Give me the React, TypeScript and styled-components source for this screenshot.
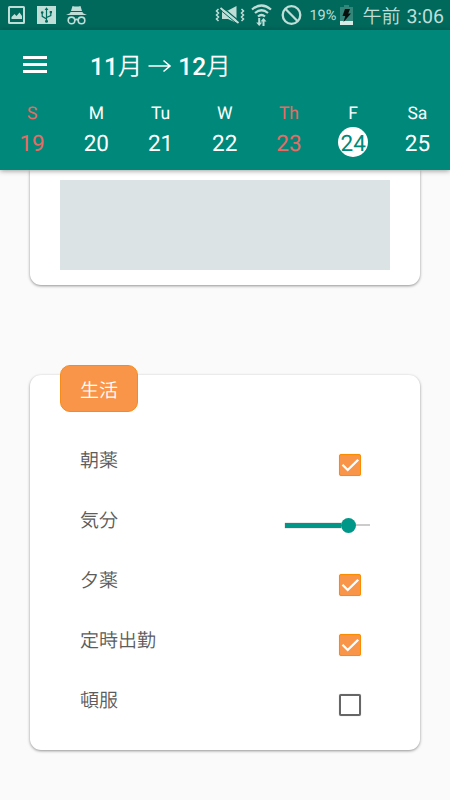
import React from "react";
import styled, { createGlobalStyle } from "styled-components";

const GlobalStyle = createGlobalStyle`
  * { box-sizing: border-box; }
  body {
    margin: 0;
    background: #fafafa;
    font-family: Roboto, "Noto Sans CJK JP", sans-serif;
    text-rendering: geometricPrecision;
    overflow: hidden;
  }
`;

const Screen = styled.div`
  width: 450px;
  height: 800px;
  overflow: hidden;
  background: #fafafa;
  display: flex;
  flex-direction: column;
`;

const StatusBar = styled.div`
  height: 30px;
  flex: none;
  background: #00695c;
  color: #bfded8;
  display: flex;
  align-items: center;
  justify-content: space-between;
  padding: 0 6px 0 7px;
`;

const StatusGroup = styled.div`
  display: flex;
  align-items: center;
  height: 30px;
`;

const Glyph = styled.svg<{ $gap?: number }>`
  display: block;
  flex: none;
  margin-right: ${(p) => p.$gap ?? 0}px;
`;

const Percent = styled.span`
  font-size: 14.5px;
  line-height: 30px;
  margin-right: 4px;
  padding-top: 2px;
`;

const Clock = styled.span`
  display: flex;
  gap: 6px;
  font-size: 19px;
  line-height: 30px;
  font-weight: 350;
  padding-top: 3px;
`;

const ClockDigits = styled.span`
  font-weight: 400;
  font-size: 19.5px;
`;

const Header = styled.header`
  position: relative;
  z-index: 1;
  height: 140px;
  flex: none;
  background: #00897b;
  color: #fff;
  box-shadow: 0 1px 5px rgba(0, 0, 0, 0.38);
`;

const TitleRow = styled.div`
  display: flex;
  align-items: center;
  height: 71px;
  padding-left: 23px;
`;

const MenuButton = styled.button`
  width: 24px;
  height: 17px;
  padding: 0;
  border: 0;
  background: none;
  display: flex;
  flex-direction: column;
  justify-content: space-between;
  margin: -2px 43px 0 0;
`;

const MenuLine = styled.span`
  height: 3px;
  width: 24px;
  background: #fff;
`;

const Title = styled.h1`
  margin: 0;
  display: flex;
  align-items: center;
  font-size: 24.5px;
  line-height: 30px;
  font-weight: 500;
`;

const MonthSuffix = styled.span`
  font-weight: 350;
`;

const Week = styled.div`
  display: grid;
  grid-template-columns: repeat(7, 1fr);
  margin-right: 0.5px;
`;

const Day = styled.div<{ $holiday?: boolean }>`
  display: flex;
  flex-direction: column;
  align-items: center;
  color: ${(p) => (p.$holiday ? "#e76b64" : "#fff")};
`;

const DayName = styled.span`
  font-size: 17.5px;
  line-height: 22px;
  height: 26px;
  padding-top: 2px;
`;

const DayNumber = styled.span<{ $selected?: boolean }>`
  width: 30px;
  height: 30px;
  border-radius: 50%;
  display: flex;
  justify-content: center;
  font-size: 22.5px;
  line-height: 34px;
  background: ${(p) => (p.$selected ? "#fff" : "transparent")};
  color: ${(p) => (p.$selected ? "#00897b" : "inherit")};
`;

const Content = styled.main`
  flex: 1;
  padding: 0 30px;
  min-height: 0;
`;

const cardShadow = "0 1px 3px rgba(0, 0, 0, 0.42)";

const TopCard = styled.section`
  height: 115px;
  padding: 10px 30px 15px;
  background: #fff;
  border-radius: 0 0 11px 11px;
  box-shadow: ${cardShadow};
`;

const NoteArea = styled.div`
  height: 90px;
  background: #dbe3e4;
`;

const Card = styled.section`
  height: 375px;
  margin-top: 90px;
  padding: 0 50px 0 30px;
  background: #fff;
  border-radius: 11px;
  box-shadow: ${cardShadow};
`;

const Tag = styled.div`
  position: relative;
  top: -10px;
  width: 78px;
  height: 47px;
  border: 1px solid #f68b1a;
  border-radius: 10px;
  background: #f99548;
  color: #fff;
  font-size: 19px;
  line-height: 49px;
  font-weight: 350;
  text-align: center;
`;

const List = styled.div`
  padding: 13px 0 0 20px;
`;

const Row = styled.div`
  display: flex;
  justify-content: space-between;
  align-items: center;
  height: 60px;
`;

const Label = styled.span`
  font-size: 19px;
  line-height: 28px;
  font-weight: 350;
  color: #5c5c5c;
  margin-top: -8px;
`;

const CheckBox = styled.span<{ $on: boolean }>`
  width: 22px;
  height: 22px;
  margin-right: 9px;
  border-radius: 2px;
  border: ${(p) => (p.$on ? "1px solid #fb8c00" : "2px solid #666")};
  background: ${(p) => (p.$on ? "#f99548" : "#fff")};
  box-shadow: 0 0 1px ${(p) => (p.$on ? "#fb8c0080" : "#66666680")};
`;

const Slider = styled.div`
  width: 85px;
  height: 15px;
  display: flex;
  align-items: center;
`;

const Filled = styled.span`
  width: 56.3px;
  height: 5px;
  background: #009688;
  box-shadow: 0 0 1px #888;
`;

const Thumb = styled.span`
  width: 15px;
  height: 15px;
  border-radius: 50%;
  background: #009688;
`;

const Track = styled.span`
  flex: 1;
  height: 2px;
  background: #ccc;
`;

const days = [
  { name: "S", date: 19, holiday: true },
  { name: "M", date: 20 },
  { name: "Tu", date: 21 },
  { name: "W", date: 22 },
  { name: "Th", date: 23, holiday: true },
  { name: "F", date: 24, selected: true },
  { name: "Sa", date: 25 },
];

const items: { label: string; checked?: boolean; slider?: boolean }[] = [
  { label: "朝薬", checked: true },
  { label: "気分", slider: true },
  { label: "夕薬", checked: true },
  { label: "定時出勤", checked: true },
  { label: "頓服", checked: false },
];

const PictureIcon = () => (
  <Glyph width="19" height="20" viewBox="0 0 19 20" $gap={11}>
    <path fill="currentColor" fillRule="evenodd" d="M2.500 1h14A1.500 1.500 0 0 1 18 2.500v15a1.500 1.500 0 0 1-1.500 1.500h-14A1.500 1.500 0 0 1 1 17.500v-15A1.500 1.500 0 0 1 2.500 1zM3 3v14h13V3z" />
    <path fill="currentColor" d="M4.500 14v-2l3-3 2 2 3-3.500 2.500 3.500v3z" />
  </Glyph>
);

const UsbIcon = () => (
  <Glyph width="19" height="20" viewBox="0 0 19 20" $gap={10}>
    <path fill="currentColor" d="M0 1h19v18H0z" />
    <path
      d="M9.500 4v12M9.500 14L5.200 11.300V8M9.500 12.500L13.800 10.500V7"
      stroke="#00695c"
      strokeWidth="1.200"
      fill="none"
    />
    <path fill="#00695c" d="M9.500 2.200l1.900 2.800H7.600zM12.700 6h2.300v2.300h-2.300z" />
    <circle cx="5.200" cy="7.500" r="1.300" fill="#00695c" />
    <circle cx="9.500" cy="16.200" r="1.500" fill="#00695c" />
  </Glyph>
);

const IncognitoIcon = () => (
  <Glyph width="21" height="20" viewBox="0 0 21 20">
    <path fill="currentColor" d="M6.500 1q4 1 8 0l1.500 5H5zM4.500 7h12l.5 1.300 4 1.700H0l4-1.700z" />
    <g fill="none" stroke="currentColor" strokeWidth="1.600">
      <circle cx="5.500" cy="15.400" r="3.300" />
      <circle cx="15.500" cy="15.400" r="3.300" />
      <path d="M8.800 15q1.700-1.200 3.400 0" />
    </g>
  </Glyph>
);

const VibrateIcon = () => (
  <Glyph width="30" height="20" viewBox="0 0 30 20" $gap={6}>
    <path fill="currentColor" d="M7 5.500h6l8.500-4.500v17l-8.500-4H7z" />
    <path stroke="#00695c" strokeWidth="1.300" d="M6.800 1.800L24.500 16.500" />
    <path stroke="currentColor" strokeWidth="2" d="M5.500 3L23.500 18" />
    <path stroke="#00695c" strokeWidth="1" d="M4.500 4.200L22.500 19.200" />
    <path fill="none" stroke="currentColor" strokeWidth="1.500" d="M3.500 4L1.500 6l2 2-2 2 2 2-2 2 2 2M26.500 4l2 2-2 2 2 2-2 2 2 2-2 2" />
  </Glyph>
);

const WifiIcon = () => (
  <Glyph width="21" height="24" viewBox="0 0 21 24" $gap={9}>
    <g fill="none" stroke="currentColor" strokeWidth="2.200">
      <path d="M1 6.500q9.500-8 19 0M4 10q6.500-5.500 13 0M7 13.500q3.500-3 7 0" />
    </g>
    <path fill="currentColor" d="M7.200 15h2v4.500h2L8.200 23l-3-3.500h2zM13.500 23h-2v-4.500h-2l3-3.500 3 3.500h-2z" />
  </Glyph>
);

const BlockIcon = () => (
  <Glyph width="21" height="22" viewBox="0 0 21 22" $gap={7}>
    <circle cx="10.500" cy="11" r="8.800" fill="none" stroke="currentColor" strokeWidth="2.300" />
    <path d="M4.300 4.800l12.400 12.400" stroke="currentColor" strokeWidth="2.300" />
  </Glyph>
);

const BatteryIcon = () => (
  <Glyph width="13" height="20" viewBox="0 0 13 20" $gap={9}>
    <path fill="#338679" d="M4 0h5v2h4v14H0V2h4z" />
    <path fill="#d6ebe6" d="M0 16h13v4H0z" />
    <path fill="#080f0d" d="M5 4h5L8.200 8.500H11L3.500 17l1.800-6H2.500z" />
  </Glyph>
);

const Arrow = () => (
  <Glyph width="24" height="18" viewBox="0 0 24 18" $gap={6}>
    <path d="M.5 9H22M15.500 3.500L22 9l-6.500 5.500" fill="none" stroke="#fff" strokeWidth="1.600" />
  </Glyph>
);

const Tick = () => (
  <Glyph width="20" height="20" viewBox="0 0 20 20">
    <path d="M2.500 9.800l5.200 5.200L18.200 4.700" fill="none" stroke="#fff" strokeWidth="2.300" />
  </Glyph>
);

const Month = styled.span<{ $gap?: number }>`
  margin-right: ${(p) => p.$gap ?? 0}px;
  padding-top: 2px;
`;

export default function App() {
  return (
    <>
      <GlobalStyle />
      <Screen>
        <StatusBar>
          <StatusGroup>
            <PictureIcon />
            <UsbIcon />
            <IncognitoIcon />
          </StatusGroup>
          <StatusGroup>
            <VibrateIcon />
            <WifiIcon />
            <BlockIcon />
            <Percent>19%</Percent>
            <BatteryIcon />
            <Clock>
              <span>午前</span>
              <ClockDigits>3:06</ClockDigits>
            </Clock>
          </StatusGroup>
        </StatusBar>
        <Header>
          <TitleRow>
            <MenuButton aria-label="Menu">
              <MenuLine />
              <MenuLine />
              <MenuLine />
            </MenuButton>
            <Title>
              <Month $gap={6}>
                11<MonthSuffix>月</MonthSuffix>
              </Month>
              <Arrow />
              <Month>
                12<MonthSuffix>月</MonthSuffix>
              </Month>
            </Title>
          </TitleRow>
          <Week>
            {days.map((d) => (
              <Day key={d.date} $holiday={d.holiday}>
                <DayName>{d.name}</DayName>
                <DayNumber $selected={d.selected}>{d.date}</DayNumber>
              </Day>
            ))}
          </Week>
        </Header>
        <Content>
          <TopCard>
            <NoteArea />
          </TopCard>
          <Card>
            <Tag>生活</Tag>
            <List>
              {items.map((item) => (
                <Row key={item.label}>
                  <Label>{item.label}</Label>
                  {item.slider ? (
                    <Slider>
                      <Filled />
                      <Thumb />
                      <Track />
                    </Slider>
                  ) : (
                    <CheckBox $on={!!item.checked}>{item.checked && <Tick />}</CheckBox>
                  )}
                </Row>
              ))}
            </List>
          </Card>
        </Content>
      </Screen>
    </>
  );
}
